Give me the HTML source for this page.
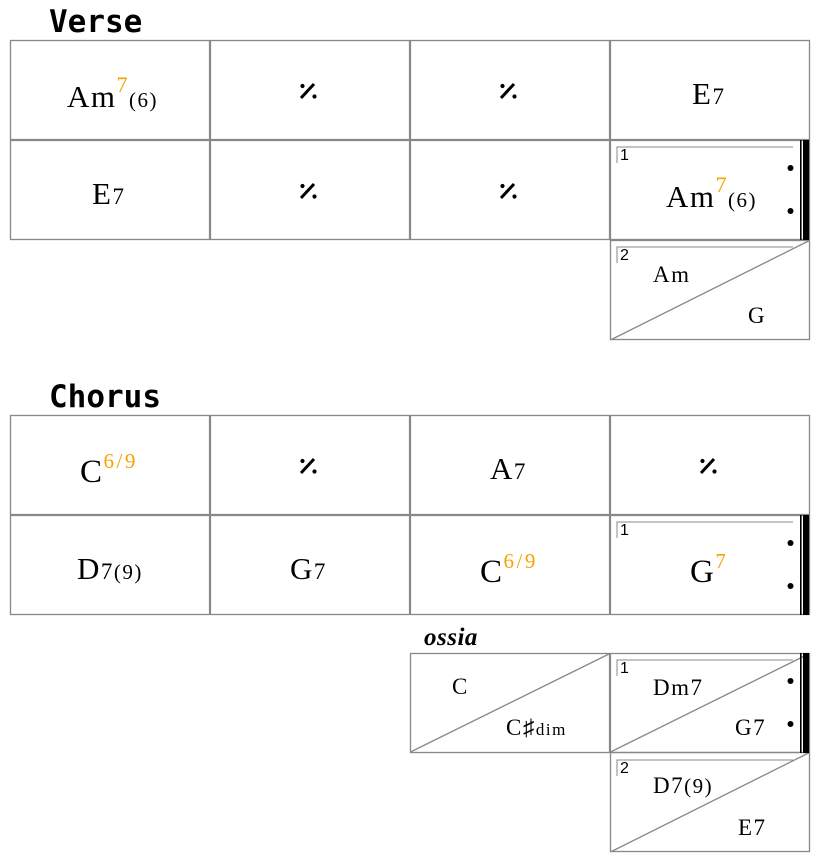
<!DOCTYPE html>
<html><head><meta charset="utf-8"><style>
html,body{margin:0;padding:0;background:#fff;}
svg{display:block}
.t{font-family:"DejaVu Sans Mono","Liberation Mono",monospace;font-weight:bold;font-size:31px;fill:#000}
.c{font-family:"Liberation Serif",serif;fill:#000;letter-spacing:1.5px}
.o{fill:#f5a300}
.n{font-family:"Liberation Sans",sans-serif;font-size:16px}
</style></head><body>
<svg width="820" height="863" viewBox="0 0 820 863" xmlns="http://www.w3.org/2000/svg">
<defs>
<g id="sim">
<line x1="301" y1="98" x2="314" y2="84" stroke="#000" stroke-width="3"/>
<circle cx="302.5" cy="86" r="2.1"/><circle cx="314.5" cy="96.5" r="2.1"/>
</g>
</defs>
<text class="t" x="49" y="32">Verse</text>
<text class="t" x="49" y="407">Chorus</text>

<g fill="none" stroke="#888" stroke-width="1.3">
<rect x="10.5" y="40.5" width="799" height="199"/>
<rect x="610.5" y="240.5" width="199" height="99"/>
<line x1="610.5" y1="340" x2="809.5" y2="240.5"/>
<rect x="10.5" y="415.5" width="799" height="199"/>
<rect x="410.5" y="653.5" width="399" height="99"/>
<rect x="610.5" y="752.5" width="199" height="99"/>
<line x1="410.5" y1="752" x2="610" y2="653.5"/>
<line x1="610.5" y1="752" x2="809.5" y2="653.5"/>
<line x1="610.5" y1="852" x2="809.5" y2="752.5"/>
<polyline points="617,163 617,147 793,147" stroke-width="1"/>
<polyline points="617,263 617,247 793,247" stroke-width="1"/>
<polyline points="617,538 617,522 793,522" stroke-width="1"/>
<polyline points="617,676 617,660 793,660" stroke-width="1"/>
<polyline points="617,776 617,760 793,760" stroke-width="1"/>
</g>
<g stroke="#888" stroke-width="2.2">
<line x1="10" y1="140" x2="810" y2="140"/>
<line x1="210" y1="40" x2="210" y2="240"/>
<line x1="410" y1="40" x2="410" y2="240"/>
<line x1="610" y1="40" x2="610" y2="240"/>
<line x1="10" y1="515" x2="810" y2="515"/>
<line x1="210" y1="415" x2="210" y2="615"/>
<line x1="410" y1="415" x2="410" y2="615"/>
<line x1="610" y1="415" x2="610" y2="615"/>
<line x1="610" y1="653" x2="610" y2="753"/>
</g>
<g fill="#000">
<rect x="800" y="140" width="1.6" height="100"/><rect x="803" y="140" width="6" height="100"/>
<circle cx="790.5" cy="168" r="3"/><circle cx="790.5" cy="211" r="3"/>
<rect x="800" y="515" width="1.6" height="100"/><rect x="803" y="515" width="6" height="100"/>
<circle cx="790.5" cy="543" r="3"/><circle cx="790.5" cy="586" r="3"/>
<rect x="800" y="653" width="1.6" height="100"/><rect x="803" y="653" width="6" height="100"/>
<circle cx="790.5" cy="681" r="3"/><circle cx="790.5" cy="724" r="3"/>
</g>
<g class="n">
<text x="620" y="160">1</text><text x="620" y="260">2</text>
<text x="620" y="535">1</text><text x="620" y="673">1</text><text x="620" y="773">2</text>
</g>
<use href="#sim"/><use href="#sim" x="200"/>
<use href="#sim" y="100"/><use href="#sim" x="200" y="100"/>
<use href="#sim" y="375"/><use href="#sim" x="400" y="375"/>

<g class="c">
<text x="67" y="107" font-size="31">Am<tspan class="o" font-size="22" dy="-15">7</tspan><tspan font-size="21" dy="15">(6)</tspan></text>
<text x="692" y="104" font-size="31">E<tspan font-size="23">7</tspan></text>
<text x="92" y="204" font-size="31">E<tspan font-size="23">7</tspan></text>
<text x="666" y="207" font-size="31">Am<tspan class="o" font-size="22" dy="-15">7</tspan><tspan font-size="21" dy="15">(6)</tspan></text>
<text x="653" y="282" font-size="23">Am</text>
<text x="748" y="323" font-size="23">G</text>

<text x="80" y="482" font-size="33">C<tspan class="o" font-size="21" dy="-14" letter-spacing="2.5">6/9</tspan></text>
<text x="490" y="479" font-size="31">A<tspan font-size="23">7</tspan></text>
<text x="77" y="579" font-size="31">D<tspan font-size="23">7</tspan><tspan font-size="21">(9)</tspan></text>
<text x="290" y="579" font-size="31">G<tspan font-size="23">7</tspan></text>
<text x="480" y="582" font-size="33">C<tspan class="o" font-size="21" dy="-14" letter-spacing="2.5">6/9</tspan></text>
<text x="690" y="582" font-size="33">G<tspan class="o" font-size="21" dy="-14">7</tspan></text>

<text x="424" y="645" font-size="25" font-weight="bold" font-style="italic" letter-spacing="0.5">ossia</text>
<text x="452" y="694" font-size="23">C</text>
<text x="506" y="735" font-size="23">C♯<tspan font-size="17">dim</tspan></text>
<text x="653" y="695" font-size="23">Dm7</text>
<text x="735" y="735" font-size="23">G7</text>
<text x="653" y="793" font-size="23">D7<tspan font-size="21">(9)</tspan></text>
<text x="738" y="835" font-size="23">E7</text>
</g>
</svg>
</body></html>
